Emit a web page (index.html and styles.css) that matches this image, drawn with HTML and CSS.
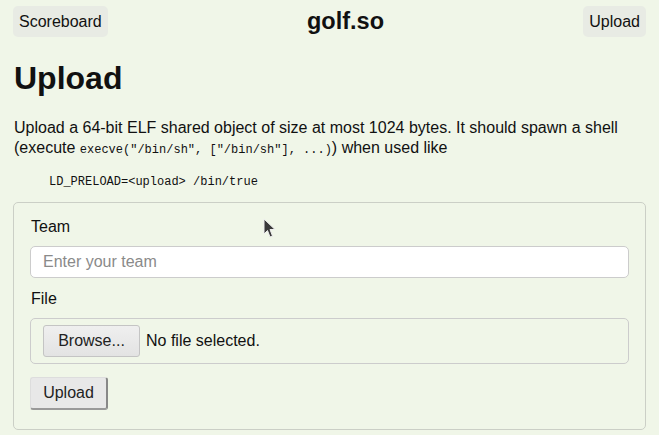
FILE: index.html
```html
<!DOCTYPE html>
<html>
<head>
<meta charset="utf-8">
<link rel="stylesheet" href="styles.css">
</head>
<body>
<div class="page">
  <header class="top">
    <a class="navbtn">Scoreboard</a>
    <div class="brand">golf.so</div>
    <a class="navbtn">Upload</a>
  </header>
  <h1 class="title">Upload</h1>
  <p class="desc">Upload a 64-bit ELF shared object of size at most 1024 bytes. It should spawn a shell (execute <code class="code">execve("/bin/sh", ["/bin/sh"], ...)</code>) when used like</p>
  <pre class="pre">LD_PRELOAD=&lt;upload&gt; /bin/true</pre>
  <form class="card">
    <label class="label">Team</label>
    <input class="input" type="text" placeholder="Enter your team">
    <label class="label">File</label>
    <div class="filebox">
      <span class="browse">Browse...</span>
      <span class="nofile">No file selected.</span>
    </div>
    <div><span class="submit">Upload</span></div>
  </form>
</div>
<svg class="cursor" width="14" height="22" viewBox="0 0 14 22"><path d="M1 1 L1 16 L4.5 12.5 L7 19 L9.5 18 L7 11.5 L12 11.5 Z" fill="#3a3a3a" stroke="#eee" stroke-width="1"/></svg>
</body>
</html>
```
FILE: styles.css
```css
html, body { margin: 0; padding: 0; background: #f0f6e8; }
body { font-family: "Liberation Sans", Arial, sans-serif; color: #111; font-size: 16px; }
.page { padding: 6px 13px 0 13px; }
.top { display: flex; justify-content: space-between; align-items: center; height: 31px; }
.navbtn { background: #e8ebe4; border-radius: 5px; padding: 6px 6px; line-height: 19px; font-size: 16px; color: #111; }
.brand { font-weight: bold; font-size: 23.5px; }
.title { font-size: 32px; font-weight: bold; margin: 21px 0 0 1px; line-height: 40px; }
.desc { margin: 20px 0 0 1px; line-height: 20px; }
.code { font-family: "Liberation Mono", "Courier New", monospace; font-size: 12px; line-height: 12px; }
.pre { font-family: "Liberation Mono", "Courier New", monospace; font-size: 12px; margin: 16px 0 0 36px; line-height: 16px; }
.card { margin-top: 12px; border: 1px solid #cbcfc6; border-radius: 5px; padding: 12px 16px 19px 16px; display: flex; flex-direction: column; }
.label { line-height: 20px; margin: 2px 0 0 1px; }
.input { margin-top: 9px; height: 32px; box-sizing: border-box; border: 1px solid #ccc; border-radius: 5px; background: #fff; font-family: "Liberation Sans", Arial, sans-serif; font-size: 16px; padding: 0 12px; color: #111; }
.input::placeholder { color: #8a8a8a; }
.input + .label { margin-top: 11px; }
.filebox { margin-top: 9px; height: 46px; box-sizing: border-box; border: 1px solid #ccc; border-radius: 5px; display: flex; align-items: center; padding: 0 12px; gap: 6px; }
.browse { background: linear-gradient(#efefef, #e3e3e3); border: 1px solid #c4c4c4; border-radius: 3px; height: 32px; box-sizing: border-box; width: 97px; display: flex; align-items: center; justify-content: center; color: #222; }
.nofile { color: #111; }
.submit { margin-top: 13px; display: inline-flex; align-items: center; justify-content: center; width: 78px; height: 33px; box-sizing: border-box; background: #e8e8e8; border: 1px solid #ddd; border-right: 2px solid #888; border-bottom: 2px solid #999; border-radius: 3px; color: #222; }
.cursor { position: absolute; left: 263px; top: 218px; }
```
